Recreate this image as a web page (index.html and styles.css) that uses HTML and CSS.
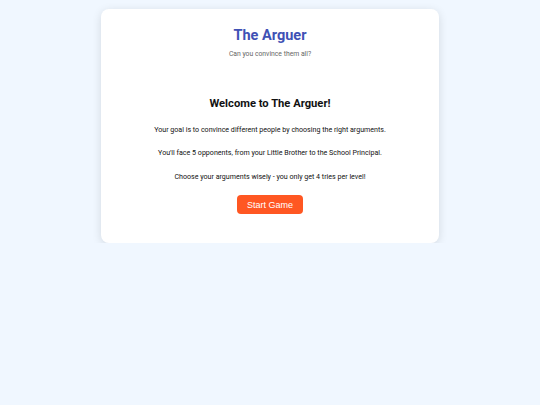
FILE: index.html
```html
<!DOCTYPE html>
<html>
<head>
<meta charset="utf-8">
<title>The Arguer</title>
<link rel="stylesheet" href="styles.css">
</head>
<body>
<div class="container">
    <header class="header">
        <h1 class="title">The Arguer</h1>
        <p class="tagline">Can you convince them all?</p>
    </header>
    <section class="intro">
        <h2 class="intro-title">Welcome to The Arguer!</h2>
        <p>Your goal is to convince different people by choosing the right arguments.</p>
        <p>You'll face 5 opponents, from your Little Brother to the School Principal.</p>
        <p>Choose your arguments wisely - you only get 4 tries per level!</p>
        <button class="start-btn">Start Game</button>
    </section>
</div>
</body>
</html>
```

FILE: styles.css
```css
* {
    margin: 0;
    padding: 0;
    box-sizing: border-box;
}

body {
    background: #f0f7ff;
    font-family: "Comic Sans MS", Roboto, sans-serif;
    color: #222;
    padding-top: 9px;
}

.container {
    width: 338px;
    margin: 0 auto;
    background: #fff;
    border-radius: 8px;
    box-shadow: 0 2px 10px rgba(0, 0, 0, 0.12);
    padding: 16px 20px 29px;
}

.header {
    text-align: center;
    margin-bottom: 37px;
}

.title {
    font-size: 14.5px;
    font-weight: bold;
    color: #3f51b5;
    line-height: 22px;
}

.tagline {
    font-size: 6.8px;
    line-height: 9px;
    color: #666;
    margin-top: 3px;
}

.intro {
    text-align: center;
}

.intro-title {
    font-size: 11.2px;
    line-height: 15px;
    font-weight: bold;
    color: #111;
    margin-bottom: 13.5px;
}

.intro p {
    font-size: 7.1px;
    line-height: 10px;
    margin-bottom: 13.5px;
    color: #111;
}

.start-btn {
    display: block;
    margin: 3.5px auto 0;
    width: 66px;
    height: 19px;
    border: none;
    border-radius: 4px;
    background: #ff5722;
    color: #fff;
    font-family: "Liberation Sans", Arial, sans-serif;
    font-size: 9px;
    cursor: pointer;
}
```
